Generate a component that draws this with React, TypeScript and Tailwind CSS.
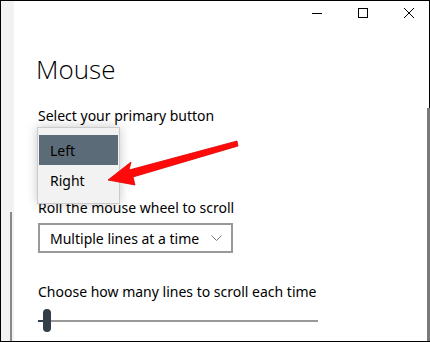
import React from "react";

const font = { fontFamily: '"Noto Sans", "Open Sans", Arial, sans-serif' };
const titleFont = { fontFamily: '"Open Sans", "Noto Sans", Arial, sans-serif' };

export default function App() {
  return (
    <div
      className="relative flex w-[430px] h-[342px] overflow-hidden bg-white border-l border-t border-b border-black text-black"
      style={font}
    >
      {/* left gray strip */}
      <div className="flex w-[13px] flex-col bg-[#f2f2f2]">
        <div className="h-[211px]" />
        <div className="ml-[9px] w-[2px] flex-1 bg-[#8a8a8a]" />
      </div>

      {/* main content */}
      <div className="flex flex-1 flex-col pl-[24px]">
        {/* caption buttons */}
        <div className="flex h-[28px] items-start justify-end gap-[36px] pr-[13px] pt-[7px]">
          <svg width="10" height="10" viewBox="0 0 10 10">
            <line x1="0" y1="5.5" x2="10" y2="5.5" stroke="#000" strokeWidth="1" />
          </svg>
          <svg width="10" height="10" viewBox="0 0 10 10">
            <rect x="0.5" y="0.5" width="9" height="9" fill="none" stroke="#000" strokeWidth="1" />
          </svg>
          <svg width="10" height="10" viewBox="0 0 10 10">
            <path d="M0 0 L10 10 M10 0 L0 10" stroke="#000" strokeWidth="1" />
          </svg>
        </div>

        <h1 className="ml-[-2px] mt-[26px] text-[26px] leading-[28px] font-light" style={titleFont}>
          Mouse
        </h1>

        <div className="mt-[23px] text-[14px] leading-[20px]">Select your primary button</div>

        <div className="relative h-[72px]">
          <div className="absolute left-[-1px] top-[1px] z-10 w-[83px] border border-[#cccccc] bg-[#f2f2f2] px-[1px] pt-[7px] pb-[8px] shadow-[0_0_10px_rgba(0,0,0,0.22)]">
            <div className="flex h-[30px] items-center bg-[#5b6b77] pl-[11px] text-[14px]">Left</div>
            <div className="flex h-[30px] items-center pl-[11px] text-[14px]">Right</div>
          </div>
        </div>

        <div className="text-[14px] leading-[20px]">Roll the mouse wheel to scroll</div>

        <div className="mt-[5px] flex h-[30px] w-[195px] items-center border-2 border-[#999999] pl-[10px] text-[14px]">
          <span>Multiple lines at a time</span>
          <svg className="ml-auto mr-[9px]" width="11" height="6" viewBox="0 0 11 6">
            <path d="M0.5 0.5 L5.5 5.5 L10.5 0.5" fill="none" stroke="#777" strokeWidth="1" />
          </svg>
        </div>

        <div className="mt-[29px] text-[14px] leading-[20px]">Choose how many lines to scroll each time</div>

        <div className="relative mt-[7px] flex h-[23px] w-[280px] items-center">
          <div className="h-[2px] w-[5px] bg-[#333f48]" />
          <div className="h-[23px] w-[8px] rounded-full bg-[#333f48]" />
          <div className="h-[2px] flex-1 bg-[#999999]" />
        </div>
      </div>

      {/* right scrollbar */}
      <div className="flex w-[3px] flex-col">
        <div className="h-[107px] border-r border-black" />
        <div className="flex-1 bg-[#7a7a7a]" />
      </div>

      {/* red arrow annotation */}
      <svg
        className="pointer-events-none absolute left-[-1px] top-[-1px] z-20"
        width="430"
        height="342"
        viewBox="0 0 430 342"
      >
        <path
          d="M108 180 L131 162 L129 170 L237 141 L238 146 L133 177 L135 185 Z"
          fill="#ff0a0a"
          stroke="#e00000"
          strokeWidth="0.8"
          strokeLinejoin="round"
        />
      </svg>
    </div>
  );
}
